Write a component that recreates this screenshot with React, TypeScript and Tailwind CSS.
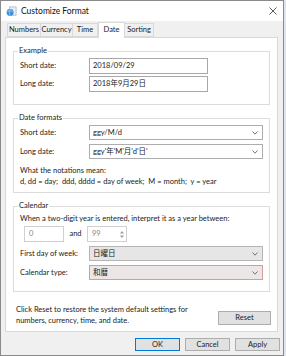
const font = "font-['Lato','Noto_Sans_CJK_JP',sans-serif]";

function Chevron() {
  return (
    <svg className="w-[6px] h-[4px]" viewBox="0 0 6 4" fill="none" stroke="#555" strokeWidth="0.8">
      <path d="M0.5 0.5 L3 3.2 L5.5 0.5" />
    </svg>
  );
}

function Row({ label, children }: { label: string; children: React.ReactNode }) {
  return (
    <div className="flex items-center">
      <div className="w-[71px] pl-[2px] shrink-0">{label}</div>
      {children}
    </div>
  );
}

function Select({ value, tone = "plain" }: { value: string; tone?: "plain" | "gray" | "red" }) {
  const styles = {
    plain: "bg-white border-[#adadad]",
    gray: "bg-[#e6e6e6] border-[#b4b4b4]",
    red: "bg-[#ece6e6] border-[#d89a9a]",
  };
  return (
    <div className={`w-[174px] h-[15px] border ${styles[tone]} flex items-center justify-between pl-[3px] pr-[4px]`}>
      <span>{value}</span>
      <Chevron />
    </div>
  );
}

export default function App() {
  return (
    <div className={`w-[286px] h-[356px] bg-[#dfe6ee] text-[7.5px] leading-[10px] text-[#222] ${font}`}>
      <div className="w-[284px] h-[356px] border border-[#8a8a8a] bg-[#f0f0f0] flex flex-col">
        {/* Title bar */}
        <div className="h-[20px] bg-white flex items-center justify-between pl-[5px] pr-[6px] shrink-0">
          <div className="flex items-center gap-[4px]">
            <svg className="w-[11px] h-[11px]" viewBox="0 0 12 12">
              <rect x="4" y="1" width="7" height="9" fill="#e8eef5" stroke="#8a9bb0" strokeWidth="0.6" />
              <circle cx="4.5" cy="7" r="3.8" fill="#3a8fd8" />
              <path d="M1.5 6 Q4.5 4.5 7.5 6 M4.5 3.2 Q3 7 4.5 10.8" stroke="#cfe6fb" strokeWidth="0.6" fill="none" />
            </svg>
            <span className="text-[8.5px] text-[#111]">Customize Format</span>
          </div>
          <svg className="w-[8px] h-[8px]" viewBox="0 0 8 8" stroke="#333" strokeWidth="0.8">
            <path d="M0.5 0.5 L7.5 7.5 M7.5 0.5 L0.5 7.5" />
          </svg>
        </div>

        {/* Tabs */}
        <div className="flex items-end pl-[6px] mt-[2px] h-[14px] relative z-10">
          <div className="h-[14px] w-[33px] border border-r-0 border-[#d9d9d9] flex items-center justify-center">Numbers</div>
          <div className="h-[14px] w-[32px] border border-r-0 border-[#d9d9d9] flex items-center justify-center">Currency</div>
          <div className="h-[14px] w-[26px] border border-[#d9d9d9] flex items-center justify-center">Time</div>
          <div className="h-[16px] w-[27px] border border-b-0 border-[#d9d9d9] bg-white -mb-[1px] flex items-center justify-center pb-[1px]">Date</div>
          <div className="h-[14px] w-[29px] border border-l-0 border-[#d9d9d9] flex items-center justify-center">Sorting</div>
        </div>

        {/* Panel */}
        <div className="ml-[4px] w-[273px] h-[295px] border border-[#d9d9d9] bg-white px-[7px] flex flex-col">
          <fieldset className="mt-[8px] border border-[#dcdcdc] pl-[4px] pr-[6px] pb-[12px]">
            <legend className="px-[1px]">Example</legend>
            <div className="flex flex-col gap-[2px] mt-[2px]">
              <Row label="Short date:">
                <div className="w-[119px] h-[16px] border border-[#a8a8a8] flex items-center pl-[3px]">2018/09/29</div>
              </Row>
              <Row label="Long date:">
                <div className="w-[119px] h-[16px] border border-[#a8a8a8] flex items-center pl-[3px]">2018年9月29日</div>
              </Row>
            </div>
          </fieldset>

          <fieldset className="mt-[8px] border border-[#dcdcdc] pl-[4px] pr-[6px] pb-[5px]">
            <legend className="px-[1px]">Date formats</legend>
            <div className="flex flex-col gap-[4px] mt-[2px]">
              <Row label="Short date:">
                <Select value="ggy/M/d" />
              </Row>
              <Row label="Long date:">
                <Select value="ggy'年'M'月'd'日'" />
              </Row>
            </div>
            <div className="mt-[7px] pl-[2px]">What the notations mean:</div>
            <div className="pl-[2px] mt-[1px]">d, dd = day;&nbsp; ddd, dddd = day of week;&nbsp; M = month;&nbsp; y = year</div>
          </fieldset>

          <fieldset className="mt-[8px] border border-[#dcdcdc] pl-[4px] pr-[6px] pb-[11px]">
            <legend className="px-[1px]">Calendar</legend>
            <div className="mt-[3px] pl-[2px]">When a two-digit year is entered, interpret it as a year between:</div>
            <div className="flex items-center mt-[2px] pl-[6px]">
              <div className="w-[40px] h-[16px] border border-[#d0d0d0] text-[#888] flex items-center pl-[4px]">0</div>
              <div className="w-[23px] text-center">and</div>
              <div className="w-[40px] h-[16px] border border-[#d0d0d0] text-[#888] flex items-center justify-between pl-[4px] pr-[2px]">
                <span>99</span>
                <svg className="w-[4px] h-[9px]" viewBox="0 0 4 9" fill="#999">
                  <path d="M0 3.5 L2 1 L4 3.5 Z M0 5.5 L2 8 L4 5.5 Z" />
                </svg>
              </div>
            </div>
            <div className="flex flex-col gap-[4px] mt-[4px]">
              <Row label="First day of week:">
                <Select value="日曜日" tone="gray" />
              </Row>
              <Row label="Calendar type:">
                <Select value="和暦" tone="red" />
              </Row>
            </div>
          </fieldset>

          <div className="flex items-start justify-between mt-[12px] pl-[3px]">
            <div className="leading-[11px]">
              <div>Click Reset to restore the system default settings for</div>
              <div>numbers, currency, time, and date.</div>
            </div>
            <div className="w-[53px] h-[14px] mt-[7px] mr-[-1px] border border-[#adadad] bg-[#e1e1e1] flex items-center justify-center">Reset</div>
          </div>
        </div>

        {/* Dialog buttons */}
        <div className="flex justify-end gap-[5px] pr-[3px] mt-[6px]">
          <div className="w-[45px] h-[13px] border border-[#0078d7] bg-[#e1e1e1] flex items-center justify-center">OK</div>
          <div className="w-[45px] h-[13px] border border-[#adadad] bg-[#e1e1e1] flex items-center justify-center">Cancel</div>
          <div className="w-[45px] h-[13px] border border-[#adadad] bg-[#e1e1e1] flex items-center justify-center">Apply</div>
        </div>
      </div>
    </div>
  );
}
